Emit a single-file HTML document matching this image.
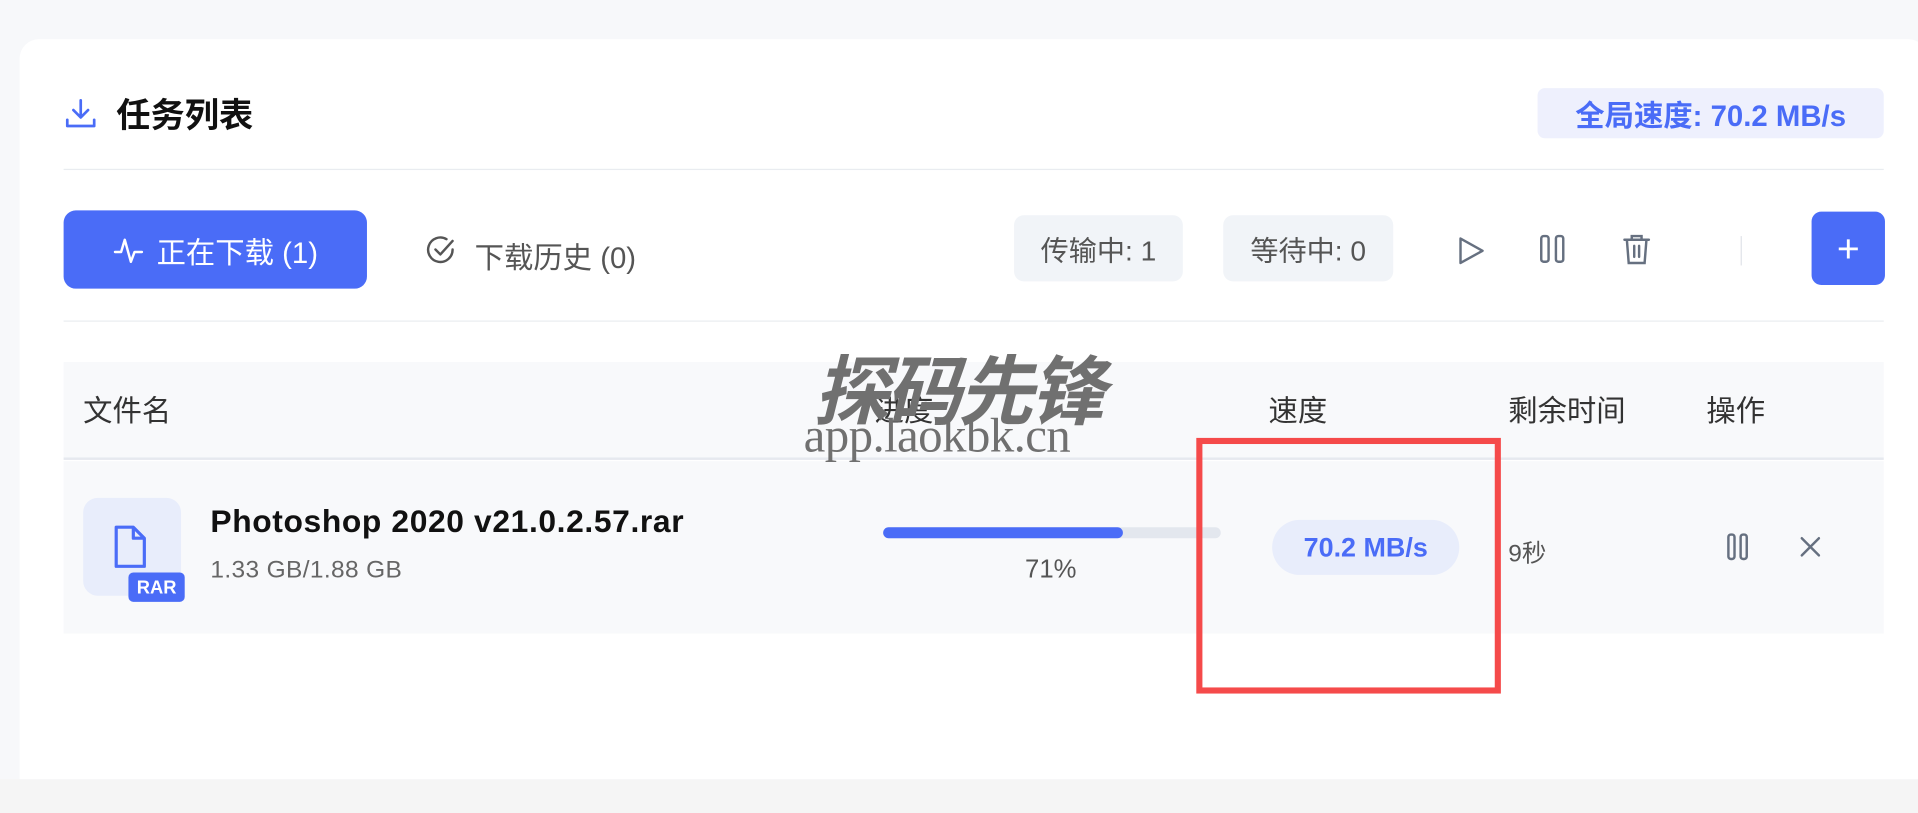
<!DOCTYPE html>
<html><head><meta charset="utf-8"><style>
html,body{margin:0;padding:0;width:1918px;height:813px;overflow:hidden;background:#f7f8fa;}
#s{position:absolute;left:0;top:0;width:1568px;height:665px;transform:scale(1.22321);transform-origin:0 0;font-family:"Liberation Sans","Noto Sans CJK SC",sans-serif;}
.a{position:absolute;}
.card{left:16px;top:32px;width:1560px;height:605px;background:#fff;border-radius:16px 16px 0 0;}
.bot{left:0;top:637px;width:1568px;height:28px;background:#f5f5f5;}
.chip{background:#f1f4f8;border-radius:8px;color:#555;font-size:22px;display:flex;align-items:center;justify-content:center;}
.h{font-size:24px;color:#333;top:316px;}
</style></head><body><div id="s">
<div class="a bot"></div>
<div class="a card"></div>
<svg class="a" style="left:52px;top:79px" width="28" height="28" viewBox="0 0 28 28" fill="none" stroke="#4a6cf7" stroke-width="2.2" stroke-linecap="round" stroke-linejoin="round"><path d="M14 3v14M8 11l6 6 6-6M3 19v5h22v-5"/></svg>
<div class="a" style="left:95px;top:73px;font-size:28px;font-weight:bold;color:#111;">任务列表</div>
<div class="a" style="left:1257px;top:72px;width:283px;height:41px;background:#eef0fd;border-radius:6px;color:#4a6cf7;font-weight:bold;font-size:24px;display:flex;align-items:center;justify-content:center;">全局速度: 70.2 MB/s</div>
<div class="a" style="left:52px;top:138px;width:1488px;height:1px;background:#e9ecf0"></div>
<div class="a" style="left:52px;top:172px;width:248px;height:64px;background:#4a6cf7;border-radius:10px;color:#fff;font-size:24px;display:flex;align-items:center;justify-content:center;gap:10px;">
<svg width="26" height="28" viewBox="0 0 26 28" fill="none" stroke="#fff" stroke-width="2" stroke-linecap="round" stroke-linejoin="round"><path d="M2 16h5l3-10 5 18 3-8h6"/></svg>正在下载 (1)</div>
<svg class="a" style="left:348px;top:192px" width="26" height="26" viewBox="0 0 26 26" fill="none" stroke="#555" stroke-width="2" stroke-linecap="round" stroke-linejoin="round"><path d="M22 12a10 10 0 1 1-5-8.5"/><path d="M8 12l4 4 10-11"/></svg>
<div class="a" style="left:388px;top:191px;font-size:24px;color:#555;">下载历史 (0)</div>
<div class="a chip" style="left:829px;top:176px;width:138px;height:54px;font-size:23px;">传输中: 1</div>
<div class="a chip" style="left:1000px;top:176px;width:139px;height:54px;font-size:23px;">等待中: 0</div>
<svg class="a" style="left:1190px;top:192px" width="26" height="26" viewBox="0 0 26 26" fill="none" stroke="#667080" stroke-width="2" stroke-linejoin="round"><path d="M4 3l18 10-18 10z"/></svg>
<svg class="a" style="left:1257px;top:191px" width="24" height="26" viewBox="0 0 24 26" fill="none" stroke="#667080" stroke-width="2"><rect x="3" y="2" width="6" height="21" rx="2"/><rect x="15" y="2" width="6" height="21" rx="2"/></svg>
<svg class="a" style="left:1325px;top:190px" width="26" height="28" viewBox="0 0 26 28" fill="none" stroke="#667080" stroke-width="2" stroke-linecap="round"><path d="M3 6h20M9 6V3h8v3M5 6l1.5 19h13L21 6M11 11v9M15 11v9"/></svg>
<div class="a" style="left:1423px;top:193px;width:1px;height:24px;background:#e0e3e8"></div>
<div class="a" style="left:1481px;top:173px;width:60px;height:60px;background:#4a6cf7;border-radius:8px;color:#fff;font-size:32px;display:flex;align-items:center;justify-content:center;">+</div>
<div class="a" style="left:52px;top:262px;width:1488px;height:1px;background:#e9ecf0"></div>
<div class="a" style="left:52px;top:296px;width:1488px;height:78px;background:#f8f9fb"></div>
<div class="a" style="left:52px;top:374px;width:1488px;height:2px;background:#e6e9ef"></div>
<div class="a h" style="left:68px">文件名</div>
<div class="a h" style="left:715px">进度</div>
<div class="a h" style="left:1037px">速度</div>
<div class="a h" style="left:1233px">剩余时间</div>
<div class="a h" style="left:1395px">操作</div>
<div class="a" style="left:52px;top:377px;width:1488px;height:141px;background:#f8f9fb"></div>
<div class="a" style="left:68px;top:407px;width:80px;height:80px;background:#e8edfb;border-radius:12px"></div>
<svg class="a" style="left:90px;top:428px" width="36" height="40" viewBox="0 0 36 40" fill="none" stroke="#4a6cf7" stroke-width="2.6" stroke-linejoin="round"><path d="M5 3h14l9 9v23H5z"/><path d="M19 3v9h9"/></svg>
<div class="a" style="left:105px;top:468px;width:46px;height:24px;background:#4a6cf7;border-radius:4px;color:#fff;font-size:15px;font-weight:bold;display:flex;align-items:center;justify-content:center;">RAR</div>
<div class="a" style="left:172px;top:411px;font-size:26px;font-weight:bold;color:#111;letter-spacing:0.5px;">Photoshop 2020 v21.0.2.57.rar</div>
<div class="a" style="left:172px;top:455px;font-size:20px;color:#666;letter-spacing:0.3px;">1.33 GB/1.88 GB</div>
<div class="a" style="left:722px;top:431px;width:276px;height:9px;background:#e3e7ee;border-radius:5px"></div>
<div class="a" style="left:722px;top:431px;width:196px;height:9px;background:#4a6cf7;border-radius:5px"></div>
<div class="a" style="left:838px;top:454px;font-size:21px;color:#555;">71%</div>
<div class="a" style="left:1040px;top:425px;width:153px;height:45px;background:#e8edfb;border-radius:23px;color:#4a6cf7;font-weight:bold;font-size:22px;display:flex;align-items:center;justify-content:center;">70.2 MB/s</div>
<div class="a" style="left:1233px;top:436px;font-size:20px;color:#555;">9秒</div>
<svg class="a" style="left:1410px;top:435px" width="22" height="24" viewBox="0 0 22 24" fill="none" stroke="#667080" stroke-width="2"><rect x="3" y="2" width="5" height="20" rx="2"/><rect x="13" y="2" width="5" height="20" rx="2"/></svg>
<svg class="a" style="left:1470px;top:437px" width="20" height="20" viewBox="0 0 20 20" stroke="#667080" stroke-width="2" stroke-linecap="round"><path d="M3 3l14 14M17 3L3 17"/></svg>
<div class="a" style="left:978px;top:358px;width:239px;height:199px;border:5px solid #f54a4a;"></div>
<div class="a" style="left:665px;top:270px;font-size:62px;font-weight:bold;font-style:italic;color:#707070;letter-spacing:-3px;">探码先锋</div>
<div class="a" style="left:657px;top:332px;font-family:'Liberation Serif',serif;font-size:40px;color:#707070;letter-spacing:-0.5px;">app.laokbk.cn</div>
</div></body></html>
